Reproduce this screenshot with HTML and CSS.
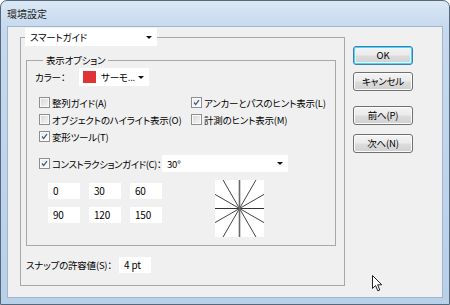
FILE: index.html
```html
<html>
    <head>
        <title>環境設定</title>
        <link rel="stylesheet" href="styles.css">
    </head>
    <body>
        <div class="Ventana">
            <div class="Titulo">環境設定</div>

            <div class="Cliente">
                <!-- Grupo principal con el desplegable como titulo -->
                <fieldset class="Grupo Exterior">
                    <legend class="Combo ComboGuia"><span>スマートガイド</span><i class="Flecha"></i></legend>

                    <fieldset class="Grupo Interior">
                        <legend class="Leyenda">表示オプション</legend>

                        <!-- Color -->
                        <div class="FilaColor">
                            <span class="EtqColor">カラー：</span>
                            <div class="Combo ComboColor"><b class="Muestra"></b><span>サーモ...</span><i class="Flecha"></i></div>
                        </div>

                        <!-- Casillas -->
                        <div class="Casillas">
                            <div class="Casilla"><span class="Caja"></span>整列ガイド(A)</div>
                            <div class="Casilla"><span class="Caja Marcada"><svg viewBox="0 0 11 11"><path d="M2.5 5.5 L4.5 8 L8.5 2.5" fill="none" stroke="#3d5a8c" stroke-width="1.6"/></svg></span>アンカーとパスのヒント表示(L)</div>
                            <div class="Casilla"><span class="Caja"></span>オブジェクトのハイライト表示(O)</div>
                            <div class="Casilla"><span class="Caja"></span>計測のヒント表示(M)</div>
                            <div class="Casilla"><span class="Caja Marcada"><svg viewBox="0 0 11 11"><path d="M2.5 5.5 L4.5 8 L8.5 2.5" fill="none" stroke="#3d5a8c" stroke-width="1.6"/></svg></span>変形ツール(T)</div>
                        </div>

                        <!-- Guia de construccion -->
                        <div class="FilaGuia">
                            <div class="Casilla EtqGuia"><span class="Caja Marcada"><svg viewBox="0 0 11 11"><path d="M2.5 5.5 L4.5 8 L8.5 2.5" fill="none" stroke="#3d5a8c" stroke-width="1.6"/></svg></span>コンストラクションガイド(C)：</div>
                            <div class="Combo ComboAngulo"><span>30°</span><i class="Flecha"></i></div>
                        </div>

                        <!-- Angulos -->
                        <div class="Angulos">
                            <div class="Rejilla">
                                <div class="Campo">0</div>
                                <div class="Campo">30</div>
                                <div class="Campo">60</div>
                                <div class="Campo">90</div>
                                <div class="Campo">120</div>
                                <div class="Campo">150</div>
                            </div>
                            <svg class="Estrella" viewBox="0 0 49 57">
                                <rect width="49" height="57" fill="#fff"/>
                                <line x1="0" y1="28.5" x2="49" y2="28.5" stroke="#333" stroke-width="1"/>
                                <line x1="0" y1="14.4" x2="49" y2="42.6" stroke="#444" stroke-width="1"/>
                                <line x1="0" y1="42.6" x2="49" y2="14.4" stroke="#444" stroke-width="1"/>
                                <line x1="8.05" y1="0" x2="40.95" y2="57" stroke="#444" stroke-width="1"/>
                                <line x1="40.95" y1="0" x2="8.05" y2="57" stroke="#444" stroke-width="1"/>
                                <line x1="24.5" y1="0" x2="24.5" y2="57" stroke="#6a6a6a" stroke-width="1.6"/>
                            </svg>
                        </div>
                    </fieldset>

                    <!-- Tolerancia -->
                    <div class="FilaAjuste">
                        <span class="EtqAjuste">スナップの許容値(S)：</span>
                        <div class="Campo CampoAjuste">4 pt</div>
                    </div>
                </fieldset>

                <!-- Botones -->
                <div class="Botones">
                    <div class="Boton Defecto">OK</div>
                    <div class="Boton Cancelar">キャンセル</div>
                    <div class="Boton Anterior">前へ(P)</div>
                    <div class="Boton Siguiente">次へ(N)</div>
                </div>
            </div>

            <!-- Puntero del raton -->
            <svg class="Puntero" viewBox="0 0 11 17">
                <path d="M0.5 0.5 L0.5 13.5 L3.5 10.5 L5.8 15.8 L7.8 15 L5.6 9.8 L9.8 9.8 Z" fill="#fff" stroke="#222" stroke-width="1"/>
            </svg>
        </div>
    </body>
</html>
```

FILE: styles.css
```css
*{
    box-sizing: border-box;
}

body{
    margin: 0;
    font-family: "Noto Sans CJK JP", sans-serif;
    font-size: 9.5px;
    letter-spacing: -0.2px;
    font-feature-settings: "palt";
    white-space: nowrap;
    color: #000;
}

.Ventana{
    position: relative;
    width: 450px;
    height: 305px;
    display: flex;
    flex-direction: column;
    padding: 0 6px 6px 6px;
    border: 1px solid #56687c;
    border-radius: 7px 7px 0 0;
    background: linear-gradient(#dbe8f6, #c6d9ee 26px, #b9d0e9);
}

.Titulo{
    height: 25px;
    line-height: 26px;
    font-size: 10px;
    letter-spacing: 0;
    color: #222;
}

.Cliente{
    flex: 1;
    display: flex;
    align-items: flex-start;
    padding: 1px 0 0 12px;
    background: #f0f0f0;
    border: 1px solid #9fb6ce;
}

.Grupo{
    margin: 0;
    padding: 0;
    border: 1px solid #a8a8a8;
    min-width: 0;
}

.Exterior{
    width: 325px;
    padding-bottom: 12px;
}

.Interior{
    width: 310px;
    margin: 7px 0 0 5px;
    padding-bottom: 8px;
}

.Combo{
    display: flex;
    align-items: center;
    background: #fff;
    height: 18px;
    padding: 0 5px;
}

.Combo span{
    flex: 1;
}

.ComboGuia{
    width: 132px;
    margin-left: 4px;
}

.Flecha{
    width: 0;
    height: 0;
    border-left: 3px solid transparent;
    border-right: 3px solid transparent;
    border-top: 3px solid #111;
}

.Leyenda{
    margin-left: 16px;
    padding: 0 3px;
    line-height: 14px;
}

.FilaColor{
    display: flex;
    align-items: center;
    margin: 1px 0 0 8px;
}

.EtqColor{
    width: 44px;
}

.ComboColor{
    width: 70px;
    padding-left: 4px;
}

.Muestra{
    width: 13px;
    height: 12px;
    margin-right: 5px;
    background: #e03434;
}

.Casillas{
    display: grid;
    grid-template-columns: 152px 1fr;
    grid-auto-rows: 17px;
    margin: 8px 0 0 12px;
}

.Casilla{
    display: flex;
    align-items: center;
}

.Caja{
    flex: none;
    width: 11px;
    height: 11px;
    margin-right: 2px;
    border: 1px solid #8e8f8f;
    background: linear-gradient(135deg, #d6d6d6, #f6f6f6);
    box-shadow: inset 0 0 0 1px #fafafa;
}

.Caja svg{
    display: block;
    width: 9px;
    height: 9px;
}

.Marcada{
    background: linear-gradient(135deg, #e8e8e8, #ffffff);
}

.FilaGuia{
    display: flex;
    align-items: center;
    margin: 10px 0 0 12px;
}

.EtqGuia{
    width: 123px;
    letter-spacing: -0.45px;
}

.ComboAngulo{
    width: 126px;
    height: 17px;
}

.Angulos{
    display: flex;
    align-items: flex-start;
    margin: 8px 0 0 21px;
}

.Rejilla{
    display: grid;
    grid-template-columns: repeat(3, 32px);
    grid-auto-rows: 16px;
    column-gap: 9px;
    row-gap: 8px;
    margin-top: 3px;
}

.Campo{
    background: #fff;
    height: 16px;
    line-height: 16px;
    padding-left: 5px;
    font-size: 10px;
}

.Estrella{
    width: 49px;
    height: 57px;
    margin-left: 53px;
}

.FilaAjuste{
    display: flex;
    align-items: center;
    margin: 11px 0 0 5px;
}

.EtqAjuste{
    width: 93px;
}

.CampoAjuste{
    width: 32px;
}

.Botones{
    display: flex;
    flex-direction: column;
    margin: 18px 0 0 8px;
}

.Boton{
    width: 60px;
    height: 19px;
    line-height: 17px;
    text-align: center;
    border: 1px solid #707070;
    border-radius: 3px;
    background: linear-gradient(#f4f4f4, #ebebeb 45%, #dcdcdc 55%, #d0d0d0);
    box-shadow: inset 0 0 0 1px #fbfbfb;
}

.Defecto{
    border-color: #3c7fb1;
    box-shadow: inset 0 0 0 1px #48d8f9, inset 0 0 0 2px #e8f6fd;
}

.Cancelar{
    margin-top: 7px;
}

.Anterior{
    margin-top: 15px;
}

.Siguiente{
    margin-top: 9px;
}

.Puntero{
    position: absolute;
    left: 371px;
    top: 274px;
    width: 11px;
    height: 17px;
}
```
